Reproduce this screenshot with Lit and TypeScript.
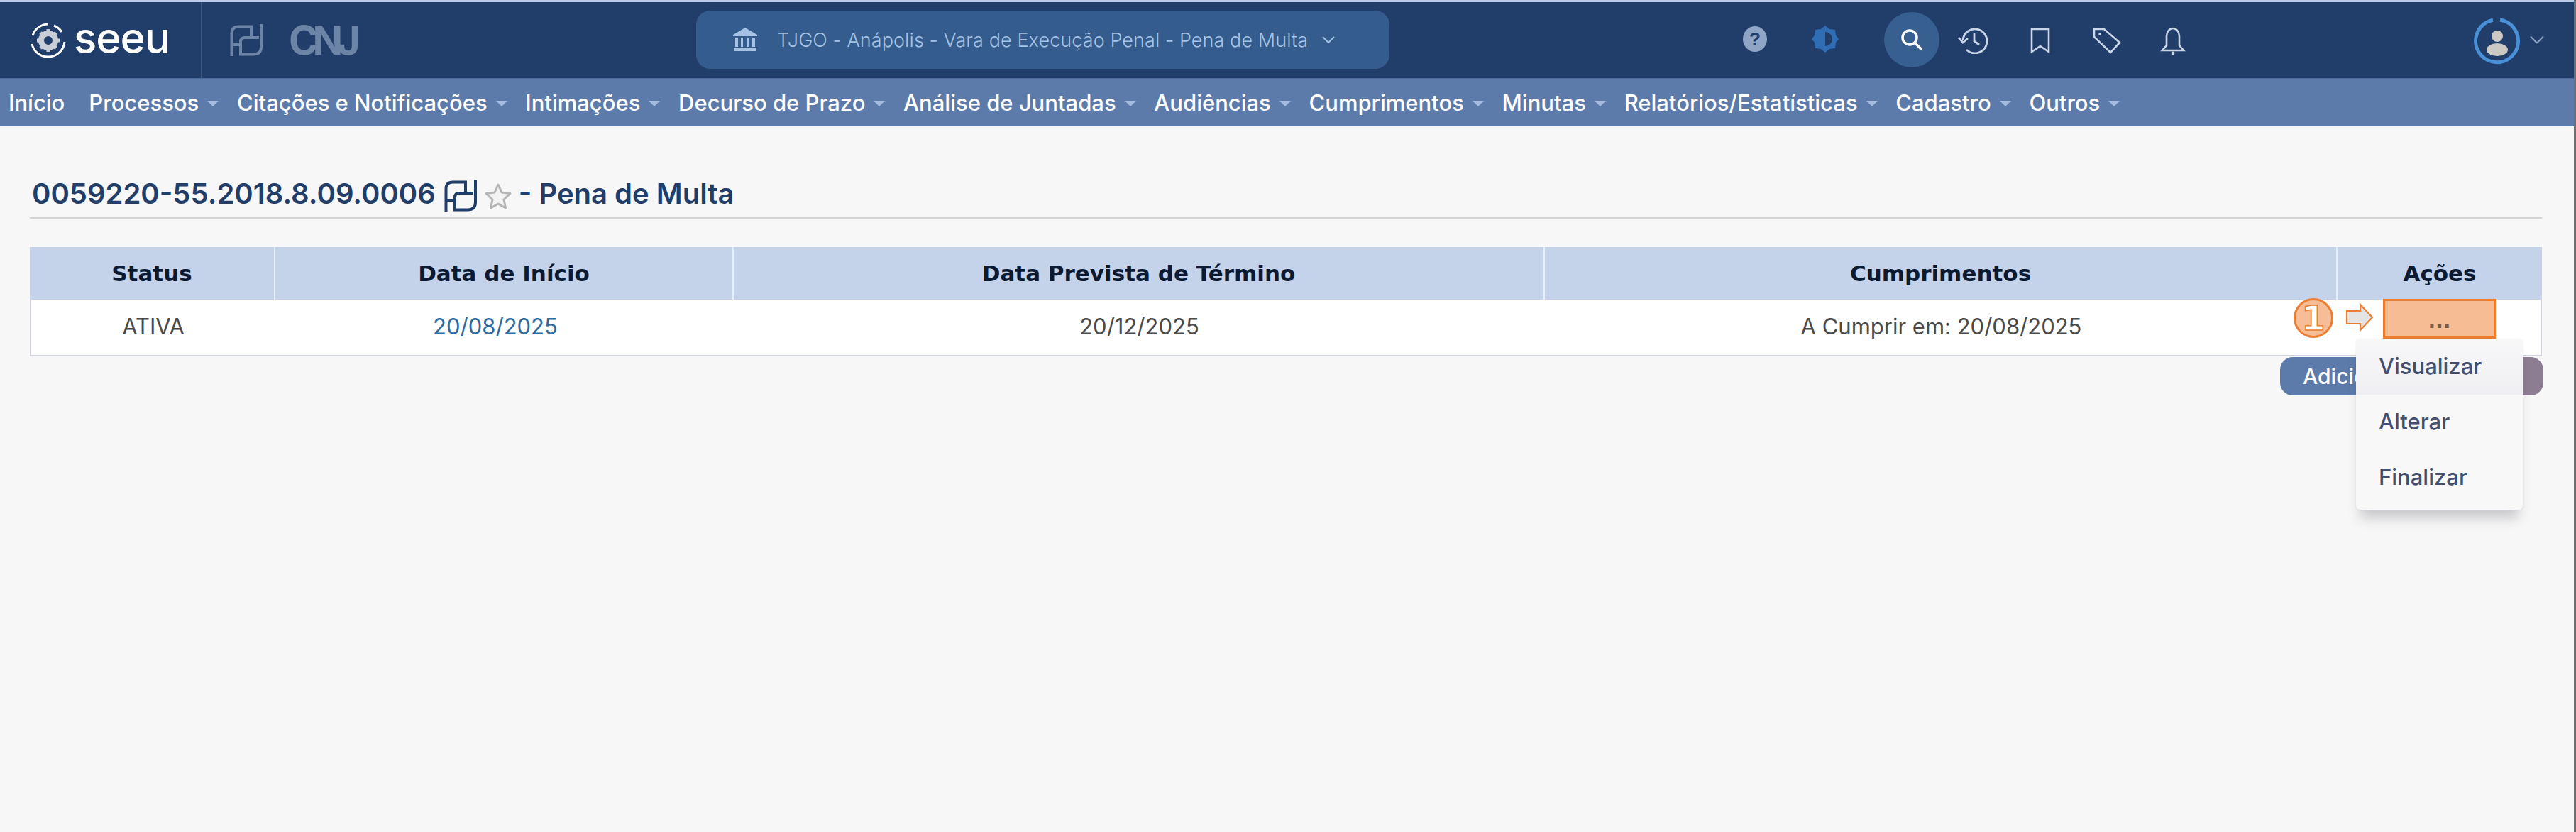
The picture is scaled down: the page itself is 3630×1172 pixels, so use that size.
import { LitElement, html, css } from "lit";
import { customElement } from "lit/decorators.js";

const navItems: [string, boolean][] = [
  ["Início", false], ["Processos", true], ["Citações e Notificações", true], ["Intimações", true],
  ["Decurso de Prazo", true], ["Análise de Juntadas", true], ["Audiências", true], ["Cumprimentos", true],
  ["Minutas", true], ["Relatórios/Estatísticas", true], ["Cadastro", true], ["Outros", true],
];

const fd = (color: string, sw: number) => html`<svg width="46" height="45" viewBox="0 0 46 45" fill="none" stroke=${color} stroke-width=${sw}>
  <path d="M2.5 45V13Q2.5 3.5 12 3.5H30V19"/><path d="M41 19H21Q15 19 15 25V42.5H33Q44 42.5 44 32V0"/><path d="M2.5 29H15"/>
</svg>`;

@customElement("app-root")
export class AppRoot extends LitElement {
  static styles = css`
    :host { display: block; width: 3630px; height: 1172px; background: #f7f7f7; font-family: Inter, "Liberation Sans", sans-serif; position: relative; overflow: hidden; box-sizing: border-box; border-right: 3px solid #6e6e6e; }
    .top { height: 110px; box-sizing: border-box; border-top: 3px solid #b9cbe6; background: #213d6a; display: flex; align-items: center; position: relative; }
    .brand { width: 241px; padding-left: 42px; height: 100%; display: flex; align-items: center; gap: 10px; border-right: 2px solid #3c5680; }
    .seeu { font-size: 60px; font-weight: 500; color: #fff; letter-spacing: -1px; line-height: 1; padding-bottom: 8px; }
    .cnj-block { display: flex; align-items: center; gap: 37px; margin-left: 39px; }
    .cnj { font-size: 56px; font-weight: 700; letter-spacing: -8px; color: #6c84a6; line-height: 1; }
    .pill { position: absolute; left: 981px; top: 12px; width: 977px; height: 82px; border-radius: 20px; background: #345d8d; display: flex; align-items: center; color: #a6c3e6; font-size: 27px; font-weight: 300; letter-spacing: .08px; padding-left: 51px; box-sizing: border-box; gap: 27px; }
    .pill .chev { margin-left: -7px; }
    .icons { position: absolute; top: 0; left: 0; }
    .ic { position: absolute; display: flex; align-items: center; justify-content: center; transform: translate(-50%, -50%); }
    .search { width: 78px; height: 78px; border-radius: 50%; background: #375f90; }
    .nav { height: 68px; background: #5c7bab; display: flex; align-items: center; padding-left: 12px; color: #fff; font-size: 31px; font-weight: 500; border-top: 1px solid #4a6a9c; box-sizing: border-box; }
    .nav-item { display: flex; align-items: center; white-space: nowrap; margin-right: 25.7px; }
    .nav-item.plain { margin-right: 34px; }
    .nav-item .caret { width: 0; height: 0; border-left: 8px solid transparent; border-right: 8px solid transparent; border-top: 8px solid #a4bbdf; margin-left: 12px; margin-top: 3px; }
    main { padding: 0 45px 0 42px; position: relative; }
    .title { height: 130px; box-sizing: border-box; border-bottom: 2px solid #d4d4d4; display: flex; align-items: flex-end; padding: 0 0 6px 3px; color: #213d6a; font-size: 40px; font-weight: 600; line-height: 54px; margin-bottom: 40px; white-space: nowrap; }
    .title .fd { margin: 0 0 2px 12px; display: flex; }
    .title .star { margin: 0 9px 5px 10px; display: flex; }
    .table { border: 2px solid #d0d3dc; border-top: 0; background: #fff; }
    .row { display: grid; grid-template-columns: 346px 646px 1143px 1117px 1fr; }
    .head { background: #c4d3ea; height: 74px; font-family: "DejaVu Sans", sans-serif; font-weight: 700; font-size: 31px; color: #0b1a33; margin: 0 -2px; }
    .head > div { display: flex; align-items: center; justify-content: center; border-right: 2px solid #e6eef9; }
    .head > div:last-child { border-right: 0; }
    .body { height: 78px; font-size: 31px; color: #4a4a4a; box-sizing: border-box; padding-bottom: 3px; grid-template-columns: 344px 646px 1143px 1117px 1fr; }
    .body > div { display: flex; align-items: center; justify-content: center; }
    .link { color: #2f6a9f; padding-right: 26px; }
    .actions-row { display: flex; justify-content: flex-end; margin-right: -2px; }
    .add { margin-top: 1px; width: 371px; height: 54px; border-radius: 18px; background: linear-gradient(90deg, #5c7bab 50%, #8d7d92 50%); color: #fff; font-size: 30px; font-weight: 500; line-height: 54px; padding-left: 32px; box-sizing: border-box; white-space: nowrap; }
    .badge { position: absolute; left: 3232px; top: 420px; width: 56px; height: 56px; border-radius: 50%; background: #f6bd96; border: 3px solid #ed7d31; box-sizing: border-box; display: flex; align-items: center; justify-content: center; color: #fff; font: 700 48px "DejaVu Sans", sans-serif; -webkit-text-stroke: 1.5px #ed7d31; }
    .arrow { position: absolute; left: 3306px; top: 427px; }
    .btn { position: absolute; left: 3358px; top: 421px; width: 159px; height: 56px; box-sizing: border-box; border: 3px solid #ed7d31; background: #f6bc94; display: flex; justify-content: center; align-items: flex-end; color: #7a5a48; font: 700 28px/38px "DejaVu Sans", sans-serif; padding-bottom: 2px; }
    .menu { position: absolute; left: 3320px; top: 478px; width: 235px; height: 240px; border-radius: 6px; background: #f8f8f9; box-shadow: 0 18px 16px -6px rgba(40,40,60,.22), 0 0 4px rgba(40,40,60,.06); color: #434f70; font-size: 31px; font-weight: 500; box-sizing: border-box; }
    .menu div { height: 78px; box-sizing: border-box; display: flex; align-items: center; padding: 0 0 3px 32px; }
    .menu div:first-child { background: linear-gradient(180deg, #f8f8f9, #efeff3); }
  `;

  private icon(x: number, y: number, content: unknown, cls = "") {
    return html`<div class="ic ${cls}" style="left:${x}px;top:${y}px">${content}</div>`;
  }

  render() {
    return html`
      <header class="top">
        <div class="brand">
          <svg width="52" height="50" viewBox="0 0 52 50" fill="none">
            <path d="M26 2A23 23 0 0 0 4 18M3 30A23 23 0 0 0 26 48A23 23 0 0 0 49 27M45 13A23 23 0 0 0 34 4" stroke="#fff" stroke-width="3"/>
            <circle cx="26" cy="25" r="10" fill="none" stroke="#c9ced6" stroke-width="8"/>
            <path d="M26 9v6M26 35v6M10 25h6M36 25h6M15 14l4 4M33 32l4 4M37 14l-4 4M19 32l-4 4" stroke="#c9ced6" stroke-width="5"/>
          </svg>
          <span class="seeu">seeu</span>
        </div>
        <div class="cnj-block">${fd("#6c84a6", 4)}<span class="cnj">CNJ</span></div>
        <div class="pill">
          <svg width="36" height="34" viewBox="0 0 36 34" fill="#a6c3e6"><path d="M18 0L35 10V12H1V10ZM4 14h4v13H4ZM12 14h3v13h-3ZM21 14h3v13h-3ZM28 14h4v13h-4ZM2 28h32v5H2Z"/></svg>
          <span>TJGO - Anápolis - Vara de Execução Penal - Pena de Multa</span>
          <svg class="chev" width="18" height="10" viewBox="0 0 18 10" fill="none" stroke="#a6c3e6" stroke-width="2"><path d="M1 1l8 8 8-8"/></svg>
        </div>
        <div class="icons">
          ${this.icon(2473, 52, html`<svg width="34" height="36" viewBox="0 0 34 36"><ellipse cx="17" cy="18" rx="17" ry="18" fill="#8ea5c6"/><text x="17" y="27" text-anchor="middle" font-family="Liberation Sans" font-weight="700" font-size="26" fill="#213d6a">?</text></svg>`)}
          ${this.icon(2572, 52, html`<svg width="38" height="38" viewBox="0 0 38 38"><path fill="#2f6db5" d="M19 0l6 5 8 1 1 8 4 5-4 5-1 8-8 1-6 5-6-5-8-1-1-8-4-5 4-5 1-8 8-1Z"/><path fill="#213d6a" d="M19 9a10 10 0 0 1 0 20Z"/></svg>`)}
          ${this.icon(2694, 53, html`<svg width="32" height="32" viewBox="0 0 32 32" fill="none" stroke="#fff" stroke-width="3.5"><circle cx="13" cy="13" r="10"/><path d="M20 20L30 30"/></svg>`, "search")}
          ${this.icon(2780, 54, html`<svg width="42" height="38" viewBox="0 0 42 38" fill="none" stroke="#c9d6e8" stroke-width="2.8"><path d="M7 19a17 17 0 1 1 5 13"/><path d="M1 15l6 7 7-6" /><path d="M23 9v11l7 5"/></svg>`)}
          ${this.icon(2875, 54, html`<svg width="28" height="36" viewBox="0 0 28 36" fill="none" stroke="#c9d6e8" stroke-width="2.6"><path d="M2 2H26V34L14 26 2 34Z"/></svg>`)}
          ${this.icon(2969, 54, html`<svg width="40" height="38" viewBox="0 0 40 38" fill="none" stroke="#c9d6e8" stroke-width="2.6"><path d="M2 3H16L38 22 25 36 2 14Z"/><circle cx="10" cy="10" r="1.8" fill="#c9d6e8" stroke="none"/></svg>`)}
          ${this.icon(3062, 55, html`<svg width="36" height="40" viewBox="0 0 36 40" fill="none" stroke="#c9d6e8" stroke-width="2.6"><path d="M18 2C13 2 9 7 9 13V26L3 33H33L27 26V13C27 7 23 2 18 2Z"/><circle cx="18" cy="37" r="2.4" fill="#c9d6e8" stroke="none"/></svg>`)}
          ${this.icon(3519, 55, html`<svg width="66" height="66" viewBox="0 0 66 66" fill="none"><path d="M37 3A30 30 0 1 1 27 3.2" stroke="#4a90d6" stroke-width="5"/><circle cx="33" cy="26" r="8" fill="#ccc9c5"/><ellipse cx="33" cy="45" rx="15" ry="9" fill="#ccc9c5"/></svg>`)}
          ${this.icon(3575, 53, html`<svg width="20" height="11" viewBox="0 0 20 11" fill="none" stroke="#8ea5c6" stroke-width="2"><path d="M1 1l9 9 9-9"/></svg>`)}
        </div>
      </header>
      <nav class="nav">
        ${navItems.map(([label, caret]) => html`<span class="nav-item ${caret ? "" : "plain"}">${label}${caret ? html`<span class="caret"></span>` : ""}</span>`)}
      </nav>
      <main>
        <div class="title">
          <span>0059220-55.2018.8.09.0006</span>
          <span class="fd">${fd("#213d6a", 4)}</span>
          <span class="star"><svg width="40" height="38" viewBox="0 0 40 38" fill="#f3f3f3" stroke="#b5b5b5" stroke-width="3" stroke-linejoin="round"><path d="M20 3l5 11 12 1.5-9 8.500 2.500 12L20 30l-10.500 6L12 24 3 15.500 15 14Z"/></svg></span>
          <span>- Pena de Multa</span>
        </div>
        <div class="table">
          <div class="row head"><div>Status</div><div>Data de Início</div><div>Data Prevista de Término</div><div>Cumprimentos</div><div>Ações</div></div>
          <div class="row body"><div>ATIVA</div><div class="link">20/08/2025</div><div>20/12/2025</div><div>A Cumprir em: 20/08/2025</div><div></div></div>
        </div>
        <div class="actions-row"><div class="add">Adicionar</div></div>
      </main>
      <div class="badge">1</div>
      <svg class="arrow" width="40" height="40" viewBox="0 0 40 40" fill="#e4e4e4" stroke="#ed7d31" stroke-width="2.2"><path d="M1 11H20V2L37 20 20 38V29H1Z"/></svg>
      <div class="btn">...</div>
      <div class="menu"><div>Visualizar</div><div>Alterar</div><div>Finalizar</div></div>
    `;
  }
}
